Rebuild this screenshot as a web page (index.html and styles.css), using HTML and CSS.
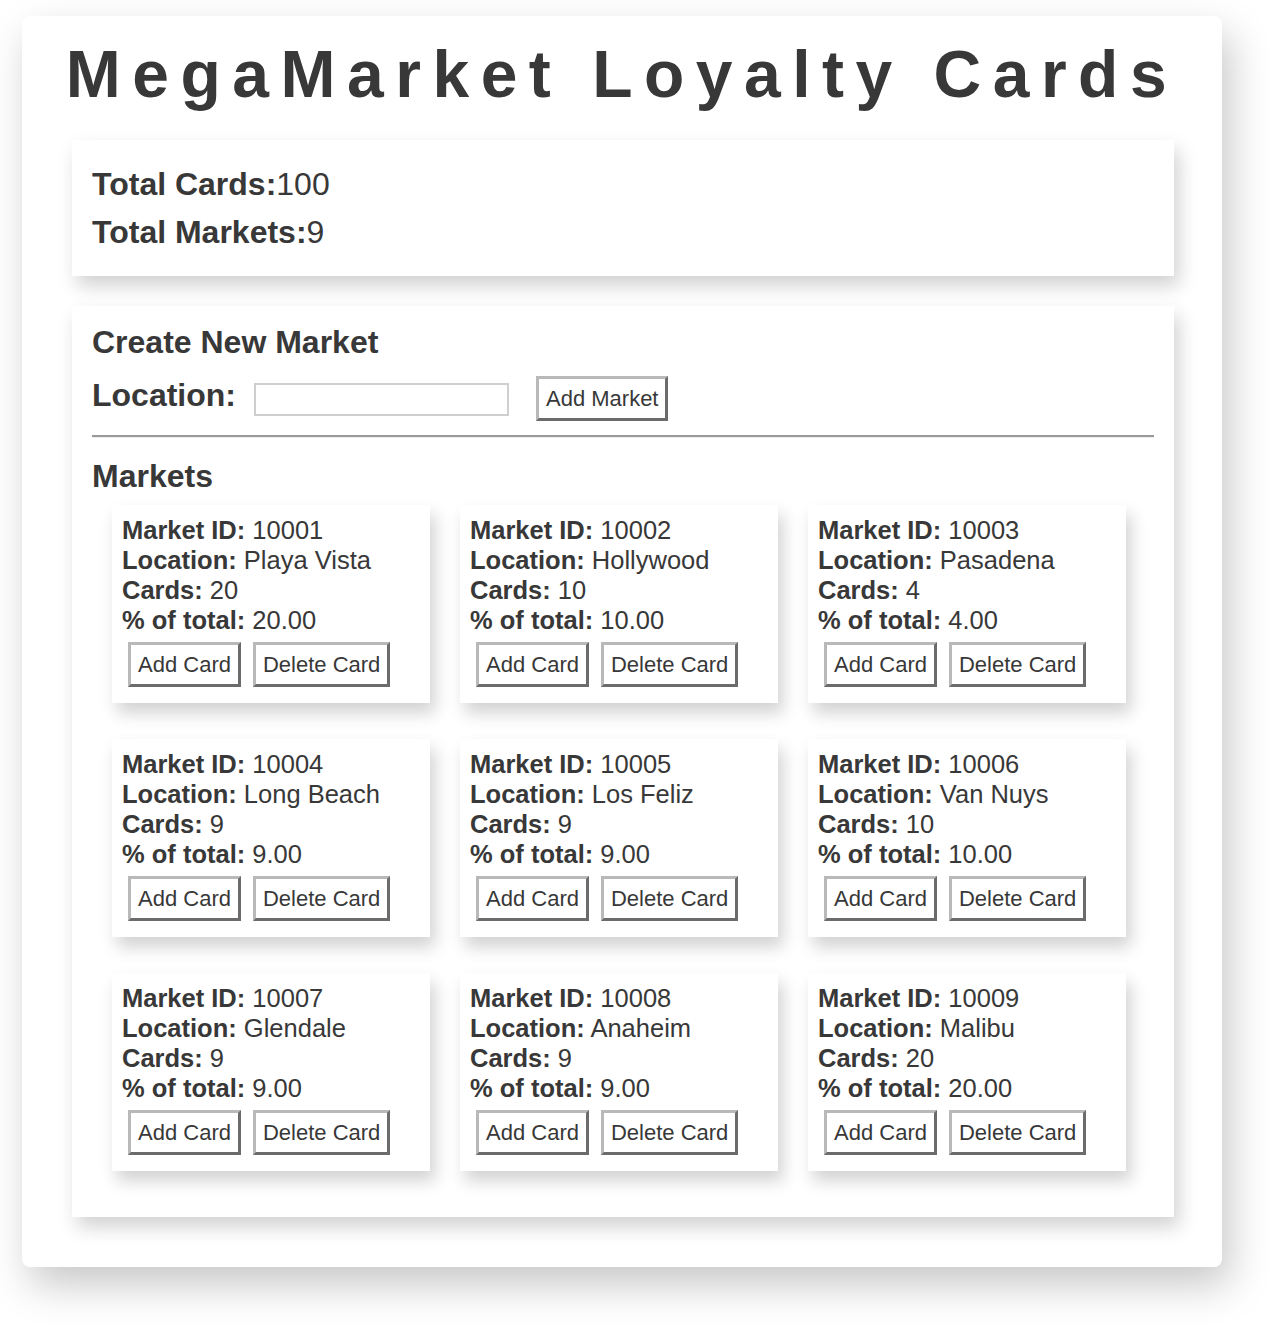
FILE: index.html
```html
<!DOCTYPE html>
<html lang="en">
<head>
<meta charset="utf-8">
<title>MegaMarket Loyalty Cards</title>
<link rel="stylesheet" href="styles.css">
</head>
<body>
<div class="app">
  <h1 class="title">MegaMarket Loyalty Cards</h1>
  <section class="panel stats">
    <div class="stat"><b>Total Cards:</b>100</div>
    <div class="stat"><b>Total Markets:</b>9</div>
  </section>
  <section class="panel create">
    <h2 class="heading">Create New Market</h2>
    <div class="form-row">
      <label class="form-label" for="loc">Location:</label>
      <input class="form-input" id="loc" type="text">
      <button class="btn">Add Market</button>
    </div>
    <hr class="divider">
    <h2 class="heading markets-heading">Markets</h2>
    <div class="grid">
      <div class="card">
        <div class="line"><b>Market ID:</b> 10001</div>
        <div class="line"><b>Location:</b> Playa Vista</div>
        <div class="line"><b>Cards:</b> 20</div>
        <div class="line"><b>% of total:</b> 20.00</div>
        <div class="actions"><button class="btn">Add Card</button><button class="btn">Delete Card</button></div>
      </div>
      <div class="card">
        <div class="line"><b>Market ID:</b> 10002</div>
        <div class="line"><b>Location:</b> Hollywood</div>
        <div class="line"><b>Cards:</b> 10</div>
        <div class="line"><b>% of total:</b> 10.00</div>
        <div class="actions"><button class="btn">Add Card</button><button class="btn">Delete Card</button></div>
      </div>
      <div class="card">
        <div class="line"><b>Market ID:</b> 10003</div>
        <div class="line"><b>Location:</b> Pasadena</div>
        <div class="line"><b>Cards:</b> 4</div>
        <div class="line"><b>% of total:</b> 4.00</div>
        <div class="actions"><button class="btn">Add Card</button><button class="btn">Delete Card</button></div>
      </div>
      <div class="card">
        <div class="line"><b>Market ID:</b> 10004</div>
        <div class="line"><b>Location:</b> Long Beach</div>
        <div class="line"><b>Cards:</b> 9</div>
        <div class="line"><b>% of total:</b> 9.00</div>
        <div class="actions"><button class="btn">Add Card</button><button class="btn">Delete Card</button></div>
      </div>
      <div class="card">
        <div class="line"><b>Market ID:</b> 10005</div>
        <div class="line"><b>Location:</b> Los Feliz</div>
        <div class="line"><b>Cards:</b> 9</div>
        <div class="line"><b>% of total:</b> 9.00</div>
        <div class="actions"><button class="btn">Add Card</button><button class="btn">Delete Card</button></div>
      </div>
      <div class="card">
        <div class="line"><b>Market ID:</b> 10006</div>
        <div class="line"><b>Location:</b> Van Nuys</div>
        <div class="line"><b>Cards:</b> 10</div>
        <div class="line"><b>% of total:</b> 10.00</div>
        <div class="actions"><button class="btn">Add Card</button><button class="btn">Delete Card</button></div>
      </div>
      <div class="card">
        <div class="line"><b>Market ID:</b> 10007</div>
        <div class="line"><b>Location:</b> Glendale</div>
        <div class="line"><b>Cards:</b> 9</div>
        <div class="line"><b>% of total:</b> 9.00</div>
        <div class="actions"><button class="btn">Add Card</button><button class="btn">Delete Card</button></div>
      </div>
      <div class="card">
        <div class="line"><b>Market ID:</b> 10008</div>
        <div class="line"><b>Location:</b> Anaheim</div>
        <div class="line"><b>Cards:</b> 9</div>
        <div class="line"><b>% of total:</b> 9.00</div>
        <div class="actions"><button class="btn">Add Card</button><button class="btn">Delete Card</button></div>
      </div>
      <div class="card">
        <div class="line"><b>Market ID:</b> 10009</div>
        <div class="line"><b>Location:</b> Malibu</div>
        <div class="line"><b>Cards:</b> 20</div>
        <div class="line"><b>% of total:</b> 20.00</div>
        <div class="actions"><button class="btn">Add Card</button><button class="btn">Delete Card</button></div>
      </div>
    </div>
  </section>
</div>
</body>
</html>
```
FILE: styles.css
```css
html, body {
  margin: 0;
  padding: 0;
  background: #ffffff;
}

body {
  font-family: "Liberation Sans", Arial, Helvetica, sans-serif;
  color: #383838;
  padding-bottom: 60px;
}

.app {
  width: 1200px;
  margin: 16px 0 0 22px;
  padding: 20px 48px 50px 50px;
  box-sizing: border-box;
  background: #ffffff;
  border-radius: 8px;
  box-shadow: 8px 18px 40px rgba(0, 0, 0, 0.22);
}

.title {
  margin: 0 -48px 28px -50px;
  font-size: 66px;
  line-height: 76px;
  font-weight: bold;
  letter-spacing: 11.5px;
  text-align: center;
}

.panel {
  background: #ffffff;
  box-shadow: 5px 10px 18px rgba(0, 0, 0, 0.18);
}

.stats {
  padding: 20px;
  font-size: 32px;
  line-height: 48px;
}

.stat b {
  font-weight: bold;
}

.create {
  margin-top: 30px;
  padding: 20px 20px 46px 20px;
}

.heading {
  margin: 0;
  font-size: 32px;
  line-height: 32px;
  font-weight: bold;
}

.form-row {
  display: flex;
  align-items: baseline;
  margin-top: 18px;
}

.form-label {
  font-size: 32px;
  line-height: 32px;
  font-weight: bold;
  margin-right: 18px;
}

.form-input {
  width: 255px;
  height: 33px;
  box-sizing: border-box;
  border: 2px solid #cfcfcf;
  padding: 4px 4px 0 4px;
  font-family: "Liberation Sans", Arial, sans-serif;
  font-size: 16px;
  background: #ffffff;
  margin-right: 27px;
}

.btn {
  font-family: "Liberation Sans", Arial, sans-serif;
  font-size: 22px;
  line-height: 25px;
  color: #383838;
  background: #ffffff;
  padding: 7px 7px;
  border-width: 3px;
  border-style: solid;
  border-color: #b9b9b9 #6b6b6b #6b6b6b #b9b9b9;
  border-radius: 0;
  margin: 0;
}

.divider {
  margin: 14px 0 22px 0;
  border: 0;
  border-top: 2px solid #9a9a9a;
  border-bottom: 1px solid #eeeeee;
  height: 0;
}

.grid {
  display: grid;
  grid-template-columns: repeat(3, 318px);
  column-gap: 30px;
  row-gap: 36px;
  margin: 13px 0 0 20px;
}

.card {
  background: #ffffff;
  padding: 10px 10px 16px 10px;
  box-shadow: 5px 10px 16px rgba(0, 0, 0, 0.18);
}

.line {
  font-size: 25.5px;
  line-height: 30px;
  white-space: nowrap;
}

.actions {
  display: flex;
  gap: 12px;
  margin-top: 7px;
  padding-left: 6px;
}
```
